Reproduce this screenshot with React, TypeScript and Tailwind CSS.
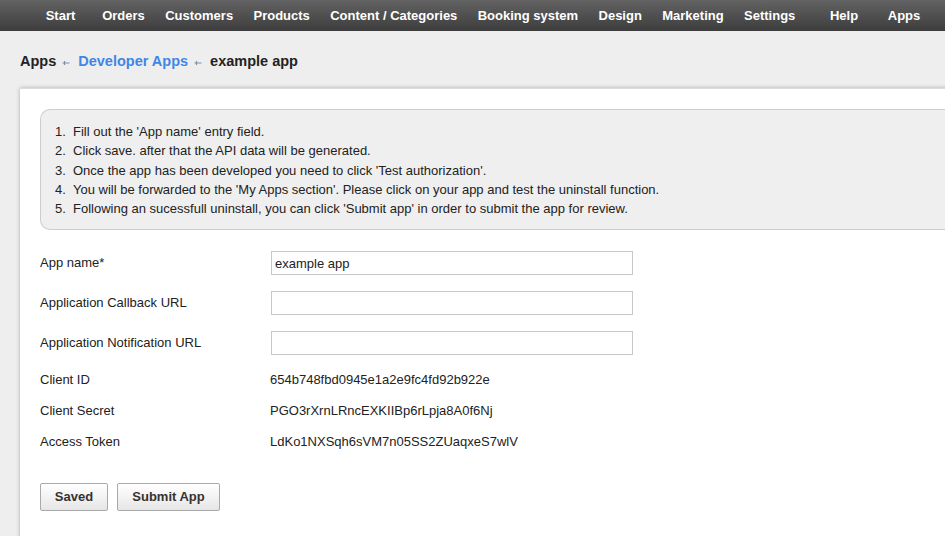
import type { ReactNode } from "react";

const NAV_LEFT = [
  "Orders",
  "Customers",
  "Products",
  "Content / Categories",
  "Booking system",
  "Design",
  "Marketing",
  "Settings",
];

const STEPS = [
  "Fill out the 'App name' entry field.",
  "Click save. after that the API data will be generated.",
  "Once the app has been developed you need to click 'Test authorization'.",
  "You will be forwarded to the 'My Apps section'. Please click on your app and test the uninstall function.",
  "Following an sucessfull uninstall, you can click 'Submit app' in order to submit the app for review.",
];

function Crumb() {
  return (
    <svg width="8" height="6" viewBox="0 0 8 6" className="mx-[6px] mt-[1px] shrink-0">
      <path d="M0.5 3H7.5M2.5 1V5" stroke="#7890aa" strokeWidth="1.2" fill="none" />
    </svg>
  );
}

function InputRow({ label, value, first }: { label: string; value?: string; first?: boolean }) {
  return (
    <div className={`flex h-[24px] items-center ${first ? "" : "mt-[16px]"}`}>
      <div className="w-[231px] shrink-0">{label}</div>
      <input
        readOnly
        value={value ?? ""}
        className="h-[24px] w-[362px] border border-[#c8c8c8] bg-white px-[3px] text-[13px] text-[#222] outline-none"
      />
    </div>
  );
}

function TextRow({ label, value, className }: { label: string; value: string; className: string }) {
  return (
    <div className={`flex h-[20px] items-center ${className}`}>
      <div className="w-[230px] shrink-0">{label}</div>
      <div>{value}</div>
    </div>
  );
}

function Button({ children, width }: { children: ReactNode; width: string }) {
  return (
    <button
      type="button"
      className={`h-[28px] ${width} rounded-[2px] border border-[#a9a9a9] bg-gradient-to-b from-[#ffffff] to-[#e6e6e6] text-[13px] font-bold text-[#333]`}
    >
      {children}
    </button>
  );
}

export default function App() {
  return (
    <div className="h-[536px] w-[945px] overflow-hidden bg-[#eeeeee] font-['Liberation_Sans',Arial,sans-serif] text-[#222]">
      {/* top nav */}
      <nav className="flex h-[31px] items-center bg-gradient-to-b from-[#636363] to-[#3d3d3d] pt-[1px] text-[13px] font-bold text-white">
        <div className="ml-[29px] w-[63px] text-center">Start</div>
        {NAV_LEFT.map((item) => (
          <div key={item} className="px-[10.2px]">
            {item}
          </div>
        ))}
        <div className="ml-auto flex pr-[11px]">
          <div className="w-[60px] text-center">Help</div>
          <div className="w-[60px] text-center">Apps</div>
        </div>
      </nav>

      {/* breadcrumb */}
      <div className="mt-[21px] flex h-[20px] items-center pl-[20px] text-[14.5px] font-bold">
        <span className="text-[#222]">Apps</span>
        <Crumb />
        <span className="ml-[2px] text-[#3f86e6]">Developer Apps</span>
        <Crumb />
        <span className="ml-[2px] text-[#222]">example app</span>
      </div>

      {/* main panel */}
      <div className="ml-[20px] mt-[16px] h-[460px] w-[960px] border-t border-[#dcdcdc] bg-white pl-[20px] pt-[20px] text-[13px] shadow-[0_0_4px_rgba(0,0,0,0.28)]">
        <div className="h-[121px] rounded-l-[10px] border border-r-0 border-[#cdcdcd] bg-[#efefef] pl-[14px] pt-[12px] leading-[19.3px]">
          <ol>
            {STEPS.map((s, i) => (
              <li key={s} className="flex">
                <span className="w-[18px] shrink-0">{i + 1}.</span>
                <span>{s}</span>
              </li>
            ))}
          </ol>
        </div>

        <div className="mt-[21px] flex flex-col">
          <InputRow first label="App name*" value="example app" />
          <InputRow label="Application Callback URL" />
          <InputRow label="Application Notification URL" />
          <TextRow className="mt-[15px]" label="Client ID" value="654b748fbd0945e1a2e9fc4fd92b922e" />
          <TextRow className="mt-[11px]" label="Client Secret" value="PGO3rXrnLRncEXKIIBp6rLpja8A0f6Nj" />
          <TextRow className="mt-[11px]" label="Access Token" value="LdKo1NXSqh6sVM7n05SS2ZUaqxeS7wlV" />
        </div>

        <div className="mt-[31px] flex gap-[9px]">
          <Button width="w-[68px]">Saved</Button>
          <Button width="w-[103px]">Submit App</Button>
        </div>
      </div>
    </div>
  );
}
